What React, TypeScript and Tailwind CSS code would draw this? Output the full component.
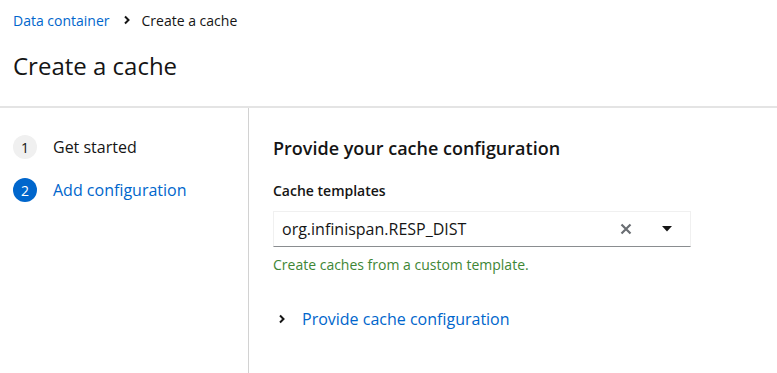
import React from "react";

export default function App() {
  return (
    <div className="w-[777px] h-[373px] bg-white overflow-hidden flex flex-col text-[#151515]" style={{ fontFamily: '"Open Sans", "Liberation Sans", sans-serif' }}>
      <div className="px-[13px] pt-[10px] flex flex-col">
        <div className="flex items-center h-[20px] text-[14px]">
          <span className="text-[#0066cc]">Data container</span>
          <svg className="ml-[13px] mr-[11px]" width="8" height="10" viewBox="0 0 8 10">
            <path d="M2 1.5 L5.5 5 L2 8.5" stroke="#151515" strokeWidth="2" fill="none" />
          </svg>
          <span>Create a cache</span>
        </div>
        <div className="mt-[19px] h-[34px] flex items-center text-[24px] font-medium leading-none">Create a cache</div>
      </div>
      <div className="mt-[23px] h-[2px] bg-[#e4e4e4]" />
      <div className="flex flex-1">
        <div className="w-[249px] border-r border-[#d2d2d2] pt-[27px] px-[13px] flex flex-col gap-[19px]">
          <div className="flex items-center h-[24px]">
            <div className="w-[24px] h-[24px] rounded-full bg-[#f0f0f0] text-[#151515] text-[14px] flex items-center justify-center">1</div>
            <span className="ml-[16px] text-[16px] text-[#151515]">Get started</span>
          </div>
          <div className="flex items-center h-[24px]">
            <div className="w-[24px] h-[24px] rounded-full bg-[#0066cc] text-white text-[14px] flex items-center justify-center">2</div>
            <span className="ml-[16px] text-[16px] text-[#0066cc]">Add configuration</span>
          </div>
        </div>
        <div className="flex-1 pl-[24px] pt-[28px] flex flex-col">
          <div className="h-[24px] flex items-center text-[18px] font-semibold">Provide your cache configuration</div>
          <div className="mt-[20px] h-[20px] flex items-center text-[14px] font-semibold">Cache templates</div>
          <div className="mt-[11px] w-[418px] h-[36px] border border-[#f0f0f0] border-b-[#8a8d90] flex items-center pl-[8px] pr-[18px]">
            <span className="flex-1 text-[16px]">org.infinispan.RESP_DIST</span>
            <svg width="12" height="12" viewBox="0 0 12 12">
              <path d="M1.5 1.5 L10.5 10.5 M10.5 1.5 L1.5 10.5" stroke="#6a6e73" strokeWidth="2.2" />
            </svg>
            <svg className="ml-[30px]" width="10" height="6" viewBox="0 0 10 6">
              <path d="M0 0 L10 0 L5 5.5 Z" fill="#151515" />
            </svg>
          </div>
          <div className="mt-[7px] h-[20px] flex items-center text-[14px] text-[#3e8635]">Create caches from a custom template.</div>
          <div className="mt-[33px] h-[24px] flex items-center">
            <svg className="ml-[5px]" width="8" height="10" viewBox="0 0 8 10">
              <path d="M2 1.5 L5.5 5 L2 8.5" stroke="#151515" strokeWidth="2" fill="none" />
            </svg>
            <span className="ml-[16px] text-[16px] text-[#0066cc]">Provide cache configuration</span>
          </div>
        </div>
      </div>
    </div>
  );
}
